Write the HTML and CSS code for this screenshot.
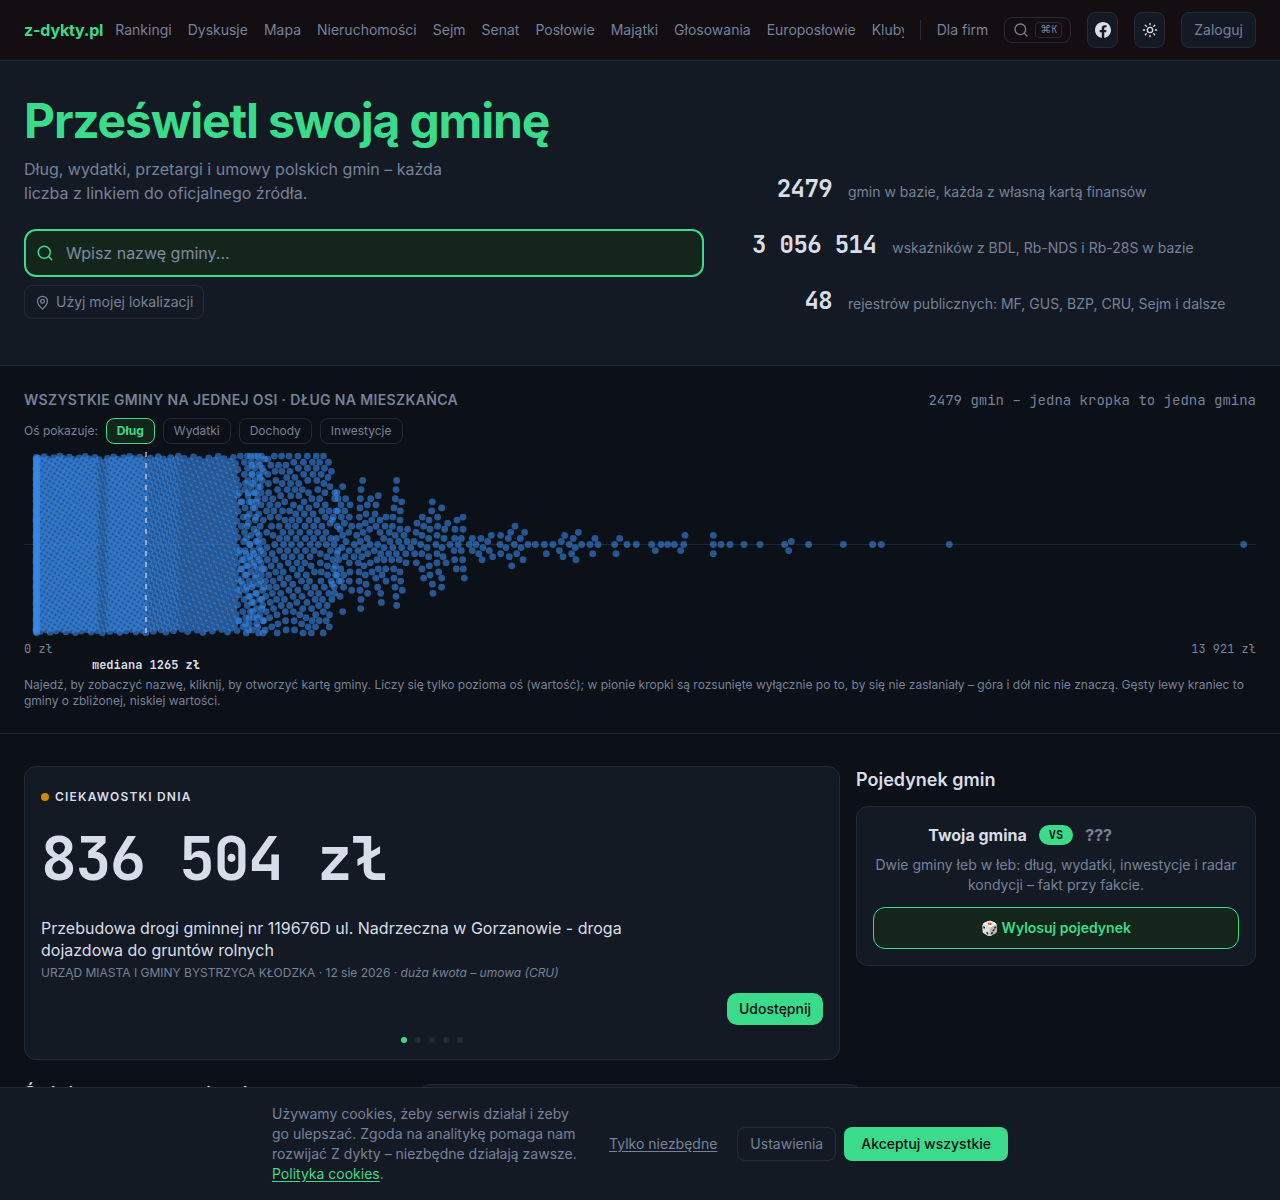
FILE: index.html
```html
<!DOCTYPE html>
<html lang="pl">
<head>
    <meta charset="UTF-8">
    <meta name="viewport" content="width=device-width, initial-scale=1.0">
    <title>z-dykty.pl</title>
    <link rel="stylesheet" href="styles.css">
</head>
<body>
    <header class="topbar">
        <a class="logo" href="#">z-dykty.pl</a>
        <nav class="nav">
            <a href="#">Rankingi</a>
            <a href="#">Dyskusje</a>
            <a href="#">Mapa</a>
            <a href="#">Nieruchomości</a>
            <a href="#">Sejm</a>
            <a href="#">Senat</a>
            <a href="#">Posłowie</a>
            <a href="#">Majątki</a>
            <a href="#">Głosowania</a>
            <a href="#">Europosłowie</a>
            <a href="#">Kluby</a>
        </nav>
        <div class="tools">
            <span class="divider"></span>
            <a class="firm-link" href="#">Dla firm</a>
            <button class="search-btn" type="button" aria-label="Szukaj">
                <svg width="16" height="16" viewBox="0 0 24 24" fill="none" stroke="currentColor" stroke-width="2" stroke-linecap="round" stroke-linejoin="round"><circle cx="11" cy="11" r="8"/><path d="m21 21-4.3-4.3"/></svg>
                <kbd><span class="cmd">⌘</span>K</kbd>
            </button>
            <a class="icon-btn" href="#" aria-label="Facebook">
                <svg width="16" height="16" viewBox="0 0 24 24" fill="currentColor"><path d="M24 12.07C24 5.4 18.63 0 12 0S0 5.4 0 12.07c0 6.03 4.39 11.02 10.13 11.93v-8.44H7.08v-3.49h3.05V9.41c0-3.02 1.79-4.69 4.53-4.69 1.31 0 2.68.24 2.68.24v2.97h-1.51c-1.49 0-1.96.93-1.96 1.88v2.26h3.33l-.53 3.49h-2.8V24C19.61 23.09 24 18.1 24 12.07z"/></svg>
            </a>
            <button class="icon-btn" type="button" aria-label="Zmień motyw">
                <svg width="16" height="16" viewBox="0 0 24 24" fill="none" stroke="currentColor" stroke-width="2" stroke-linecap="round" stroke-linejoin="round"><circle cx="12" cy="12" r="4"/><path d="M12 2v2M12 20v2M4.93 4.93l1.41 1.41M17.66 17.66l1.41 1.41M2 12h2M20 12h2M6.34 17.66l-1.41 1.41M19.07 4.93l-1.41 1.41"/></svg>
            </button>
            <a class="login" href="#">Zaloguj</a>
        </div>
    </header>

    <section class="hero">
        <div>
            <h1>Prześwietl swoją gminę</h1>
            <p class="lead">Dług, wydatki, przetargi i umowy polskich gmin – każda liczba z linkiem do oficjalnego źródła.</p>
            <label class="search-box">
                <svg width="18" height="18" viewBox="0 0 24 24" fill="none" stroke="currentColor" stroke-width="2" stroke-linecap="round" stroke-linejoin="round"><circle cx="11" cy="11" r="8"/><path d="m21 21-4.3-4.3"/></svg>
                <input type="text" placeholder="Wpisz nazwę gminy..." aria-label="Nazwa gminy">
            </label>
            <button class="locate" type="button">
                <svg width="15" height="15" viewBox="0 0 24 24" fill="none" stroke="currentColor" stroke-width="2" stroke-linecap="round" stroke-linejoin="round"><path d="M20 10c0 5-5.54 10.19-7.4 11.8a1 1 0 0 1-1.2 0C9.54 20.19 4 15 4 10a8 8 0 0 1 16 0"/><circle cx="12" cy="10" r="3"/></svg>
                Użyj mojej lokalizacji
            </button>
        </div>
        <ul class="stats">
            <li><strong>2479</strong><span>gmin w bazie, każda z własną kartą finansów</span></li>
            <li><strong>3 056 514</strong><span>wskaźników z BDL, Rb-NDS i Rb-28S w bazie</span></li>
            <li><strong>48</strong><span>rejestrów publicznych: MF, GUS, BZP, CRU, Sejm i dalsze</span></li>
        </ul>
    </section>

    <section class="swarm">
        <div class="swarm-head">
            <h2>Wszystkie gminy na jednej osi · dług na mieszkańca</h2>
            <span class="swarm-count">2479 gmin – jedna kropka to jedna gmina</span>
        </div>
        <div class="chips">
            <span>Oś pokazuje:</span>
            <button class="chip active" type="button">Dług</button>
            <button class="chip" type="button">Wydatki</button>
            <button class="chip" type="button">Dochody</button>
            <button class="chip" type="button">Inwestycje</button>
        </div>
        <canvas id="swarm" class="swarm-canvas"></canvas>
        <div class="axis"><span>0 zł</span><span>13 921 zł</span></div>
        <div class="median-row"><span class="median" style="left: 9.9%">mediana 1265 zł</span></div>
        <p class="note">Najedź, by zobaczyć nazwę, kliknij, by otworzyć kartę gminy. Liczy się tylko pozioma oś (wartość); w pionie kropki są rozsunięte wyłącznie po to, by się nie zasłaniały – góra i dół nic nie znaczą. Gęsty lewy kraniec to gminy o zbliżonej, niskiej wartości.</p>
    </section>

    <main class="content">
        <article class="card fact">
            <div class="fact-label"><i class="fact-dot"></i>Ciekawostki dnia</div>
            <div class="fact-value">836 504 zł</div>
            <p class="fact-title">Przebudowa drogi gminnej nr 119676D ul. Nadrzeczna w Gorzanowie - droga dojazdowa do gruntów rolnych</p>
            <p class="fact-meta">URZĄD MIASTA I GMINY BYSTRZYCA KŁODZKA · 12 sie 2026 · <em>duża kwota – umowa (CRU)</em></p>
            <div class="fact-actions"><button class="share" type="button">Udostępnij</button></div>
            <div class="pager">
                <button class="active" type="button" aria-label="1"></button>
                <button type="button" aria-label="2"></button>
                <button type="button" aria-label="3"></button>
                <button type="button" aria-label="4"></button>
                <button type="button" aria-label="5"></button>
            </div>
        </article>
        <aside>
            <h2 class="duel-heading">Pojedynek gmin</h2>
            <div class="card duel">
                <div class="duel-row"><strong>Twoja gmina</strong><span class="vs">VS</span><strong class="unknown">???</strong></div>
                <p>Dwie gminy łeb w łeb: dług, wydatki, inwestycje i radar kondycji – fakt przy fakcie.</p>
                <button class="draw" type="button">🎲 Wylosuj pojedynek</button>
            </div>
        </aside>
    </main>

    <section class="fresh">
        <h2>Świeże umowy w gminach</h2>
        <div class="card fresh-card"></div>
    </section>

    <div class="cookies">
        <div class="cookies-inner">
            <p>Używamy cookies, żeby serwis działał i żeby go ulepszać. Zgoda na analitykę pomaga nam rozwijać Z dykty – niezbędne działają zawsze. <a href="#">Polityka cookies</a>.</p>
            <div class="cookies-actions">
                <button class="only" type="button">Tylko niezbędne</button>
                <button class="settings" type="button">Ustawienia</button>
                <button class="accept" type="button">Akceptuj wszystkie</button>
            </div>
        </div>
    </div>

    <script src="swarm.js"></script>
</body>
</html>
```
FILE: styles.css
```css
:root {
    --bg: #0c1017;
    --panel: #141a23;
    --line: #232b39;
    --text: #d8dee9;
    --muted: #76819a;
    --green: #3adb8a;
    --green-bg: #14261b;
    --mono: "JetBrains Mono", "DejaVu Sans Mono", monospace;
}
* {
    box-sizing: border-box;
}
body {
    margin: 0;
    background: var(--bg);
    color: var(--text);
    font-family: Inter, sans-serif;
    font-size: 14px;
    line-height: 20px;
}
h1, h2, p, ul {
    margin: 0;
    padding: 0;
}
a {
    color: inherit;
    text-decoration: none;
}
button {
    font-family: inherit;
    line-height: inherit;
    cursor: pointer;
}

/* header */
.topbar {
    display: flex;
    align-items: center;
    height: 61px;
    padding: 0 24px;
    background: #140d12;
    border-bottom: 1px solid var(--line);
    color: var(--muted);
}
.logo {
    margin-right: 12px;
    color: var(--green);
    font-size: 16px;
    font-weight: 700;
    letter-spacing: -0.01em;
}
.nav {
    display: flex;
    flex: 1;
    gap: 16px;
    min-width: 0;
    overflow: hidden;
    white-space: nowrap;
}
.tools {
    display: flex;
    align-items: center;
    gap: 16px;
    margin-left: 16px;
    white-space: nowrap;
}
.divider {
    width: 1px;
    height: 20px;
    background: var(--line);
}
.search-btn {
    display: flex;
    align-items: center;
    gap: 6px;
    height: 26px;
    padding: 0 8px;
    background: none;
    border: 1px solid var(--line);
    border-radius: 8px;
    color: var(--muted);
}
.search-btn kbd {
    display: flex;
    padding: 0 4px;
    border: 1px solid var(--line);
    border-radius: 4px;
    font-family: var(--mono);
    font-size: 10px;
    line-height: 14px;
}
.search-btn .cmd {
    font-family: "DejaVu Sans", sans-serif;
    font-size: 11px;
}
.icon-btn {
    display: flex;
    align-items: center;
    justify-content: center;
    width: 31px;
    height: 36px;
    padding: 0;
    background: var(--panel);
    border: 1px solid var(--line);
    border-radius: 8px;
    color: var(--text);
}
.login {
    padding: 7px 12px;
    background: var(--panel);
    border: 1px solid var(--line);
    border-radius: 8px;
}

/* hero */
.hero {
    display: grid;
    grid-template-columns: minmax(0, 680px) minmax(0, 1fr);
    gap: 48px;
    padding: 32px 24px 36px;
    background: var(--panel);
    border-bottom: 1px solid var(--line);
}
.hero h1 {
    color: var(--green);
    font-size: 48px;
    font-weight: 700;
    line-height: 56px;
    letter-spacing: -0.025em;
}
.lead {
    max-width: 440px;
    margin-top: 8px;
    color: var(--muted);
    font-size: 16px;
    line-height: 24px;
}
.search-box {
    display: flex;
    align-items: center;
    gap: 12px;
    height: 48px;
    margin-top: 24px;
    padding: 0 10px;
    background: var(--green-bg);
    border: 2px solid var(--green);
    border-radius: 12px;
    color: var(--green);
}
.search-box input {
    flex: 1;
    min-width: 0;
    padding: 0;
    background: none;
    border: 0;
    outline: 0;
    color: var(--text);
    font-family: inherit;
    font-size: 16px;
}
.search-box input::placeholder {
    color: #7f8aa0;
}
.locate {
    display: inline-flex;
    align-items: center;
    gap: 6px;
    height: 34px;
    margin-top: 8px;
    padding: 0 10px;
    background: none;
    border: 1px solid var(--line);
    border-radius: 8px;
    color: var(--muted);
    font-size: 14px;
}
.stats {
    padding-top: 68px;
    list-style: none;
}
.stats li {
    display: flex;
    align-items: baseline;
    gap: 16px;
    padding: 12px 0;
}
.stats strong {
    min-width: 80px;
    font-family: var(--mono);
    font-size: 24px;
    line-height: 32px;
    letter-spacing: -0.025em;
    text-align: right;
    white-space: nowrap;
}
.stats span {
    color: var(--muted);
}

/* beeswarm */
.swarm {
    padding: 24px;
    border-bottom: 1px solid var(--line);
    color: var(--muted);
    font-size: 12px;
    line-height: 16px;
}
.swarm-head {
    display: flex;
    justify-content: space-between;
    font-size: 14px;
    line-height: 20px;
}
.swarm-head h2 {
    font-size: 14px;
    font-weight: 600;
    letter-spacing: 0.025em;
    text-transform: uppercase;
}
.swarm-count,
.axis,
.median-row {
    font-family: var(--mono);
}
.chips {
    display: flex;
    align-items: center;
    gap: 8px;
    margin: 8px 0;
}
.chip {
    height: 26px;
    padding: 0 10px;
    background: none;
    border: 1px solid var(--line);
    border-radius: 8px;
    color: var(--muted);
    font-size: 12px;
}
.chip.active {
    background: var(--green-bg);
    border-color: var(--green);
    color: var(--green);
    font-weight: 700;
}
.swarm-canvas {
    display: block;
    width: 100%;
    height: 185px;
}
.axis {
    display: flex;
    justify-content: space-between;
    margin-top: 4px;
}
.median-row {
    position: relative;
    height: 16px;
}
.median {
    position: absolute;
    color: var(--text);
    font-weight: 700;
    transform: translateX(-50%);
    white-space: nowrap;
}
.note {
    margin-top: 4px;
}

/* cards */
.content {
    display: grid;
    grid-template-columns: minmax(0, 1fr) 400px;
    align-items: start;
    gap: 16px;
    padding: 32px 24px 24px;
}
.card {
    padding: 16px;
    background: var(--panel);
    border: 1px solid var(--line);
    border-radius: 12px;
}
.fact {
    padding-top: 22px;
}
.fact-label {
    display: flex;
    align-items: center;
    gap: 6px;
    font-size: 12px;
    font-weight: 600;
    line-height: 16px;
    letter-spacing: 0.1em;
    text-transform: uppercase;
}
.fact-dot {
    width: 8px;
    height: 8px;
    background: #cf8a05;
    border-radius: 50%;
}
.fact-value {
    margin: 20px 0 24px;
    font-family: var(--mono);
    font-size: 60px;
    font-weight: 700;
    line-height: 68px;
    letter-spacing: -0.025em;
}
.fact-title {
    max-width: 600px;
    font-size: 16px;
    line-height: 22px;
}
.fact-meta {
    margin-top: 4px;
    color: var(--muted);
    font-size: 12px;
    line-height: 16px;
}
.fact-actions {
    margin-top: 12px;
    text-align: right;
}
.share {
    height: 32px;
    padding: 0 12px;
    background: var(--green);
    border: 0;
    border-radius: 10px;
    color: var(--bg);
    font-size: 14px;
    font-weight: 500;
    vertical-align: top;
}
.pager {
    display: flex;
    justify-content: center;
    gap: 8px;
    margin-top: 12px;
}
.pager button {
    width: 6px;
    height: 6px;
    padding: 0;
    background: var(--line);
    border: 0;
    border-radius: 50%;
}
.pager .active {
    background: var(--green);
}
.duel-heading {
    margin-bottom: 12px;
    font-size: 18px;
    font-weight: 600;
    line-height: 28px;
}
.duel {
    color: var(--muted);
    text-align: center;
}
.duel-row {
    display: grid;
    grid-template-columns: 1fr auto 1fr;
    align-items: center;
    gap: 12px;
    margin-bottom: 8px;
    font-size: 16px;
    line-height: 24px;
}
.duel-row strong {
    color: var(--text);
    text-align: right;
}
.duel-row .unknown {
    color: var(--muted);
    text-align: left;
}
.vs {
    padding: 0 10px;
    background: var(--green);
    border-radius: 10px;
    color: var(--bg);
    font-family: var(--mono);
    font-size: 12px;
    font-weight: 600;
    line-height: 20px;
}
.draw {
    width: 100%;
    height: 42px;
    margin-top: 12px;
    background: var(--green-bg);
    border: 1px solid var(--green);
    border-radius: 12px;
    color: var(--green);
    font-size: 14px;
    font-weight: 600;
    vertical-align: top;
}
.fresh {
    display: grid;
    grid-template-columns: 378px 444px;
    gap: 16px;
    padding: 0 24px 32px;
}
.fresh h2 {
    font-size: 18px;
    font-weight: 600;
    line-height: 20px;
}
.fresh-card {
    min-height: 84px;
}

/* cookie bar */
.cookies {
    position: fixed;
    right: 0;
    bottom: 0;
    left: 0;
    padding: 16px;
    background: var(--panel);
    border-top: 1px solid var(--line);
    color: var(--muted);
}
.cookies-inner {
    display: flex;
    align-items: center;
    gap: 16px;
    max-width: 736px;
    margin: 0 auto;
}
.cookies p {
    flex: 1;
}
.cookies p a {
    color: var(--green);
    text-decoration: underline;
    text-underline-offset: 2px;
}
.cookies-actions {
    display: flex;
    gap: 8px;
}
.cookies-actions button {
    height: 34px;
    padding: 0 12px;
    background: none;
    border: 1px solid transparent;
    border-radius: 8px;
    color: var(--muted);
    font-size: 14px;
    white-space: nowrap;
}
.cookies-actions .only {
    padding: 0 11px;
    text-decoration: underline;
    text-underline-offset: 2px;
}
.cookies-actions .settings {
    border-color: var(--line);
}
.cookies-actions .accept {
    padding: 0 16px;
    background: var(--green);
    color: var(--bg);
    font-weight: 500;
}
```
FILE: swarm.js
```js
// The axis is 1232 units wide; every row is 3.05px away from the next one.
const AXIS = 1232;
const ROW = 3.05;
const MAX_ROW = 29;
const MIN_DISTANCE = 6.8;

// row: positions, in thirds of a unit, counted from TAIL_START
const TAIL_START = 948;
const tail = {
    '-21': [68, 170],
    '-19': [8],
    '-18': [63, 168],
    '-17': [-9],
    '-16': [115],
    '-15': [-16, 17, 61, 92, 166],
    '-14': [185, 277],
    '-13': [3, 30, 82, 108],
    '-12': [60, 162, 305],
    '-11': [-7, 14, 181, 275],
    '-10': [78, 105],
    '-9': [4, 28, 58, 138, 159, 247, 293, 369],
    '-8': [95, 120, 180, 267, 351],
    '-7': [13, 76, 231, 323],
    '-6': [35, 58, 108, 135, 157, 251, 293, 525],
    '-5': [0, 89, 180, 203, 270, 314, 345, 369],
    '-4': [26, 69, 120, 148, 228, 512, 554, 715],
    '-3': [8, 50, 166, 192, 246, 291, 454, 482, 674, 1035, 1120],
    '-2': [82, 131, 266, 312, 344, 364, 397, 423, 505, 541, 700, 765, 839],
    '-1': [18, 61, 150, 176, 201, 222, 443, 664, 1354],
    '0': [43, 90, 113, 242, 288, 330, 355, 388, 408, 480, 523, 564, 586, 613, 639, 688, 725, 750, 774, 824, 861, 889, 935, 963, 983, 1003, 1031, 1120, 1143, 1170, 1212, 1260, 1334, 1406, 1510, 1598, 1624, 1828, 2711],
    '1': [6, 72, 132, 158, 185, 212, 261, 306, 429, 498, 543, 706],
    '2': [27, 54, 103, 342, 364, 397, 448, 658, 946, 1022, 1346],
    '3': [83, 122, 146, 169, 197, 224, 245, 291, 416, 482, 530, 619, 695, 758, 828, 1120],
    '4': [15, 42, 65, 266, 309, 458, 508, 669],
    '5': [111, 132, 155, 178, 344, 368, 426, 549, 708],
    '6': [28, 55, 91, 198, 229, 291, 318],
    '7': [72, 268, 515],
    '8': [2, 115, 137, 161, 246, 349, 370],
    '9': [30, 57, 96, 180, 296],
    '10': [11, 76, 126, 270],
    '11': [107, 162, 251, 305, 373],
    '12': [4, 28, 57, 138, 182],
    '13': [78, 277],
    '14': [11, 113, 165, 305],
    '15': [35, 60, 187],
    '16': [83, 122, 279],
    '17': [0, 168],
    '18': [63],
    '19': [124],
    '20': [170],
    '21': [62],
    '22': [8]
};

// how many gminas fall between two positions of the axis;
// these are packed so tightly that they only get spread over the full height
const crowded = [
    [12, 12.8, 150],
    [13, 74, 560],
    [74, 83, 56],
    [83, 122, 350],
    [122, 155, 235],
    [155, 215, 350]
];

// the same, with how far up they may stack
const loose = [
    [215, 220, 18, MAX_ROW],
    [220, 240, 125, MAX_ROW],
    [240, 308, 215, MAX_ROW],
    [308, 315, 20, 17]
];

let seed = 7;
function random() {
    seed = (seed * 16807) % 2147483647;
    return seed / 2147483647;
}

function buildDots() {
    const dots = [];
    for (const row in tail) {
        tail[row].forEach(x => dots.push({ x: (x + TAIL_START) / 3, row: Number(row), layer: 0 }));
    }
    crowded.forEach(([from, to, count]) => {
        for (let i = 0; i < count; i++) {
            const x = from + (to - from) * (i + 0.5) / count;
            const row = ((dots.length * 0.618034) % 1 * 2 - 1) * MAX_ROW;
            dots.push({ x: x, row: row, layer: 0 });
        }
    });
    loose.forEach(([from, to, count, maxRow]) => {
        for (let i = 0; i < count; i++) {
            const x = from + (to - from) * (i + random()) / count;
            dots.push(place(dots, x, maxRow));
        }
    });
    return dots;
}

// takes a free row on the lowest layer that still has one
function place(dots, x, maxRow) {
    const near = dots.filter(d => Math.abs(d.x - x) < MIN_DISTANCE);
    const rows = maxRow * 2 + 1;
    const start = Math.floor(random() * rows);
    for (let layer = 0; ; layer++) {
        for (let i = 0; i < rows; i++) {
            const row = (start + i) % rows - maxRow;
            const taken = near.some(d => d.layer === layer &&
                Math.hypot(d.x - x, (d.row - row) * ROW) < MIN_DISTANCE);
            if (!taken) {
                return { x: x, row: row, layer: layer };
            }
        }
    }
}

const dots = buildDots();

function draw() {
    const canvas = document.getElementById('swarm');
    const width = canvas.clientWidth;
    const height = canvas.clientHeight;
    const ratio = window.devicePixelRatio || 1;
    canvas.width = width * ratio;
    canvas.height = height * ratio;
    const ctx = canvas.getContext('2d');
    ctx.scale(ratio, ratio);
    const middle = height / 2;

    ctx.fillStyle = '#1d2633';
    ctx.fillRect(0, Math.floor(middle), width, 1);

    ctx.fillStyle = 'rgba(57, 135, 229, 0.6)';
    dots.forEach(d => {
        ctx.beginPath();
        ctx.arc(d.x * width / AXIS, middle + d.row * ROW, 3.4, 0, Math.PI * 2);
        ctx.fill();
    });

    // median
    ctx.strokeStyle = 'rgba(216, 222, 233, 0.6)';
    ctx.lineWidth = 2;
    ctx.setLineDash([5, 6]);
    ctx.beginPath();
    ctx.moveTo(0.099 * width, 0);
    ctx.lineTo(0.099 * width, height);
    ctx.stroke();
}

draw();
window.addEventListener('resize', draw);
```
